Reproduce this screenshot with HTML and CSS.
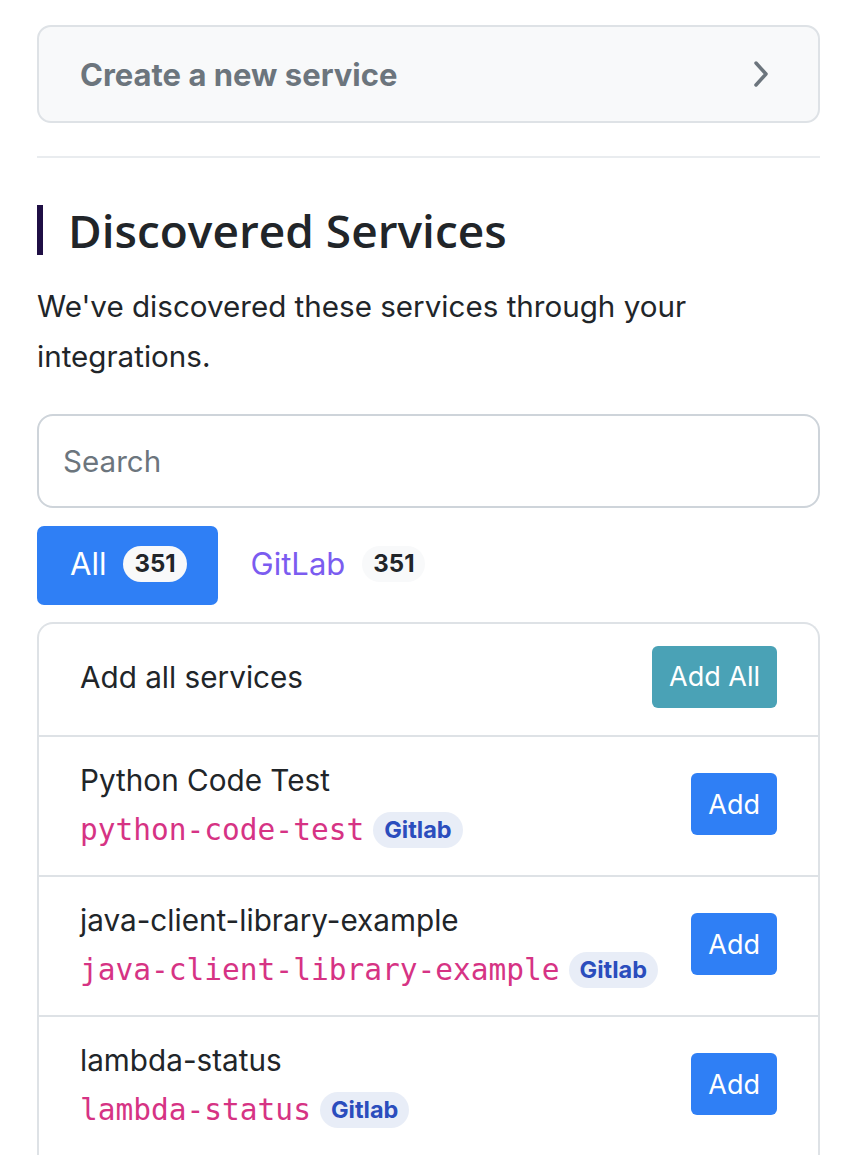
FILE: index.html
```html
<!DOCTYPE html>
<html lang="en">
<head>
    <meta charset="UTF-8">
    <meta name="viewport" content="width=device-width, initial-scale=1.0">
    <title>Discovered Services</title>
    <link rel="stylesheet" href="styles.css">
</head>
<body>
    <div class="container">
        <a href="#" class="create-card">
            <span>Create a new service</span>
            <svg class="chevron" width="18" height="28" viewBox="0 0 18 28">
                <path d="M4 3 L14 14 L4 25" fill="none" stroke="#6c757d" stroke-width="3.5" stroke-linecap="round" stroke-linejoin="round"/>
            </svg>
        </a>

        <hr class="divider">

        <h2 class="section-title">Discovered Services</h2>
        <p class="intro">We've discovered these services through your integrations.</p>

        <input type="text" class="search" placeholder="Search">

        <div class="tabs">
            <button class="tab active">All <span class="count">351</span></button>
            <button class="tab">GitLab <span class="count">351</span></button>
        </div>

        <div class="service-list">
            <div class="service-row header-row">
                <div class="service-name">Add all services</div>
                <button class="btn btn-teal">Add All</button>
            </div>
            <div class="service-row">
                <div class="service-info">
                    <div class="service-name">Python Code Test</div>
                    <div class="service-meta"><code>python-code-test</code><span class="source">Gitlab</span></div>
                </div>
                <button class="btn btn-blue">Add</button>
            </div>
            <div class="service-row">
                <div class="service-info">
                    <div class="service-name">java-client-library-example</div>
                    <div class="service-meta"><code>java-client-library-example</code><span class="source">Gitlab</span></div>
                </div>
                <button class="btn btn-blue">Add</button>
            </div>
            <div class="service-row">
                <div class="service-info">
                    <div class="service-name">lambda-status</div>
                    <div class="service-meta"><code>lambda-status</code><span class="source">Gitlab</span></div>
                </div>
                <button class="btn btn-blue">Add</button>
            </div>
        </div>
    </div>
</body>
</html>
```

FILE: styles.css
```css
* {
    margin: 0;
    padding: 0;
    box-sizing: border-box;
}

body {
    font-family: Inter, 'Liberation Sans', sans-serif;
    color: #212529;
    background: white;
}

.container {
    width: 783px;
    margin-left: 37px;
    padding-top: 25px;
}

.create-card {
    display: flex;
    justify-content: space-between;
    align-items: center;
    height: 98px;
    padding: 0 48px 0 41px;
    background: #f8f9fa;
    border: 2px solid #dee2e6;
    border-radius: 14px;
    color: #6c757d;
    font-size: 31px;
    font-weight: 700;
    text-decoration: none;
}

.chevron {
    display: block;
}

.divider {
    border: none;
    border-top: 2px solid #e9ecef;
    margin: 33px 0 0;
}

.section-title {
    margin-top: 47px;
    padding-left: 25px;
    border-left: 6px solid #1f0f45;
    font-family: 'Open Sans', 'Noto Sans', sans-serif;
    font-size: 46px;
    font-weight: 600;
    line-height: 50px;
    color: #212529;
}

.intro {
    margin-top: 26px;
    width: 700px;
    font-size: 29.6px;
    line-height: 50px;
    color: #212529;
}

.search {
    display: block;
    width: 100%;
    height: 94px;
    margin-top: 33px;
    padding: 0 24px;
    border: 2px solid #ced4da;
    border-radius: 16px;
    font-family: Inter, 'Liberation Sans', sans-serif;
    font-size: 29.6px;
    color: #212529;
}

.search::placeholder {
    color: #6c757d;
}

.tabs {
    display: flex;
    margin-top: 18px;
}

.tab {
    display: flex;
    align-items: center;
    gap: 17px;
    height: 79px;
    padding: 0 31px 4px 33px;
    border: none;
    border-radius: 7px;
    background: none;
    font-family: Inter, 'Liberation Sans', sans-serif;
    font-size: 31px;
    color: #7b5cf0;
}

.tab.active {
    background: #2f7ff5;
    color: white;
}

.count {
    display: inline-block;
    padding: 0 11px;
    height: 36px;
    line-height: 36px;
    border-radius: 18px;
    background: #f8f9fa;
    color: #212529;
    font-size: 24px;
    font-weight: 700;
}

.service-list {
    margin-top: 17px;
    border: 2px solid #dee2e6;
    border-bottom: none;
    border-radius: 16px 16px 0 0;
}

.service-row {
    display: flex;
    justify-content: space-between;
    align-items: center;
    height: 140px;
    padding: 0 41px;
    border-top: 2px solid #dee2e6;
}

.service-row.header-row {
    height: 111px;
    border-top: none;
    padding-bottom: 6px;
}

.service-info {
    margin-top: -3px;
}

.service-name {
    font-size: 29.7px;
    line-height: 36px;
    color: #212529;
}

.service-meta {
    display: flex;
    align-items: center;
    gap: 9px;
    margin-top: 14px;
}

code {
    font-family: 'DejaVu Sans Mono', 'Liberation Mono', monospace;
    font-size: 29.5px;
    color: #d63384;
}

.source {
    display: inline-block;
    height: 36px;
    line-height: 36px;
    padding: 0 11px;
    border-radius: 18px;
    background: #e8edf7;
    color: #2b4dbd;
    font-size: 23.5px;
    font-weight: 700;
}

.btn {
    height: 62px;
    padding: 0 17px;
    border: none;
    border-radius: 6px;
    color: white;
    font-family: Inter, 'Liberation Sans', sans-serif;
    font-size: 27px;
}

.btn-blue {
    margin-top: -4px;
    background: #2f7ff5;
}

.btn-teal {
    background: #4aa2b6;
}
```
